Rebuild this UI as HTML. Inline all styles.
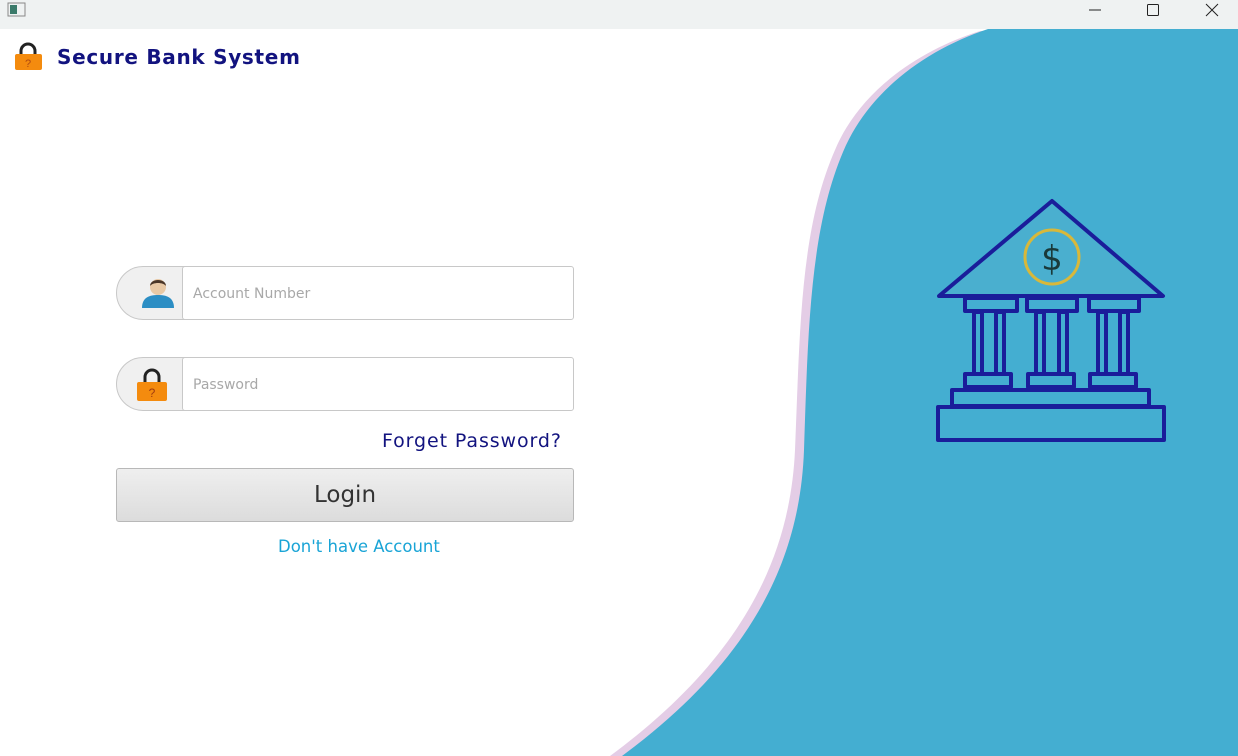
<!DOCTYPE html>
<html><head><meta charset="utf-8"><style>
*{margin:0;padding:0;box-sizing:border-box}
body{width:1238px;height:756px;overflow:hidden;background:#fff;font-family:"Liberation Sans","DejaVu Sans",sans-serif;position:relative}
.tb{position:absolute;left:0;top:0;width:1238px;height:29px;background:#eff2f2}
.title{position:absolute;left:57px;top:45px;font-family:"DejaVu Sans",sans-serif;font-weight:bold;font-size:20px;letter-spacing:0.7px;color:#12137f}
.field{position:absolute;left:116px;width:458px;height:54px}
.cap{position:absolute;left:0;top:0;width:80px;height:54px;border:1px solid #c8c8c8;border-radius:27px 0 0 27px;background:#f0f0f0}
.inp{position:absolute;left:66px;top:0;width:392px;height:54px;border:1px solid #c8c8c8;border-radius:3px;background:#fff;font-family:"DejaVu Sans",sans-serif;font-size:14px;color:#a8a8a8;padding:19px 0 0 10px}
.fp{position:absolute;left:382px;top:430px;font-family:"DejaVu Sans",sans-serif;font-size:19px;letter-spacing:0.9px;color:#12137f}
.btn{position:absolute;left:116px;top:468px;width:458px;height:54px;border:1px solid #b8b8b8;border-radius:3px;background:linear-gradient(#efefef,#dcdcdc);text-align:center;font-family:"DejaVu Sans",sans-serif;font-size:23px;color:#333;line-height:52px}
.dh{position:absolute;left:278px;top:537px;font-family:"DejaVu Sans",sans-serif;font-size:16.5px;color:#19a4d6}
</style></head><body>
<div class="tb"></div>
<svg style="position:absolute;left:0;top:0" width="1238" height="756">
<path d="M980,31 C920,50 860,90 835,150 C800,230 800,330 795,450 C790,560 740,660 610,756 L1238,756 L1238,29 Z" fill="#e4cde6"/>
<path d="M988,29 C925,50 868,92 843,152 C810,230 808,330 804,450 C800,560 752,660 622,756 L1238,756 L1238,29 Z" fill="#44aed1"/>
<g fill="none" stroke="#1a1d9a" stroke-width="4" stroke-linejoin="round">
<path d="M939,296 L1052,201 L1163,296 Z" fill="#4aafcf"/>
<circle cx="1052" cy="257" r="27" stroke="#d8b83a" stroke-width="3"/>
<rect x="965" y="298" width="52" height="13"/><rect x="1027" y="298" width="50" height="13"/><rect x="1089" y="298" width="50" height="13"/>
<rect x="974" y="312" width="8" height="62"/><rect x="996" y="312" width="8" height="62"/>
<rect x="1036" y="312" width="8" height="62"/><rect x="1059" y="312" width="8" height="62"/>
<rect x="1098" y="312" width="8" height="62"/><rect x="1120" y="312" width="8" height="62"/>
<rect x="965" y="374" width="46" height="13"/><rect x="1028" y="374" width="46" height="13"/><rect x="1090" y="374" width="46" height="13"/>
<rect x="952" y="390" width="197" height="16"/>
<rect x="938" y="407" width="226" height="33"/>
</g>
<text x="1052" y="270" font-size="34" text-anchor="middle" fill="#1a3a3a" font-family="DejaVu Sans">$</text>
<rect x="8" y="3" width="17" height="13" fill="none" stroke="#888"/><rect x="10" y="5" width="7" height="9" fill="#3a7a6a"/>
<path d="M1089,10 H1101" stroke="#222"/><rect x="1147.5" y="4.5" width="11" height="11" fill="none" stroke="#222" rx="1"/>
<path d="M1206,4 L1218,16 M1218,4 L1206,16" stroke="#222"/>
</svg>
<svg style="position:absolute;left:13px;top:41px" width="30" height="30"><path d="M8,14 V10 A7,7 0 0 1 22,10 V14" fill="none" stroke="#222" stroke-width="3"/><rect x="2" y="13" width="27" height="16" rx="2" fill="#f48b0e"/><text x="15" y="26" font-size="11" fill="#b04a10" text-anchor="middle">?</text></svg>
<div class="title">Secure Bank System</div>
<div class="field" style="top:266px"><div class="cap"></div>
<svg style="position:absolute;left:22px;top:9px" width="40" height="36"><path d="M4,33 C4,22 12,20 20,20 C28,20 36,22 36,33 Z" fill="#2c8ec4"/><circle cx="20" cy="12" r="8" fill="#e8c9a6"/><path d="M12,11 C12,3 28,3 28,11 C25,7 15,7 12,11Z" fill="#4a3628"/></svg>
<div class="inp">Account Number</div></div>
<div class="field" style="top:357px"><div class="cap"></div>
<svg style="position:absolute;left:20px;top:8px" width="32" height="38"><path d="M9,18 V12 A7,7 0 0 1 23,12 V18" fill="none" stroke="#222" stroke-width="3"/><rect x="1" y="17" width="30" height="19" rx="2" fill="#f48b0e"/><text x="16" y="32" font-size="12" fill="#a03a10" text-anchor="middle">?</text></svg>
<div class="inp">Password</div></div>
<div class="fp">Forget Password?</div>
<div class="btn">Login</div>
<div class="dh">Don't have Account</div>
</body></html>
